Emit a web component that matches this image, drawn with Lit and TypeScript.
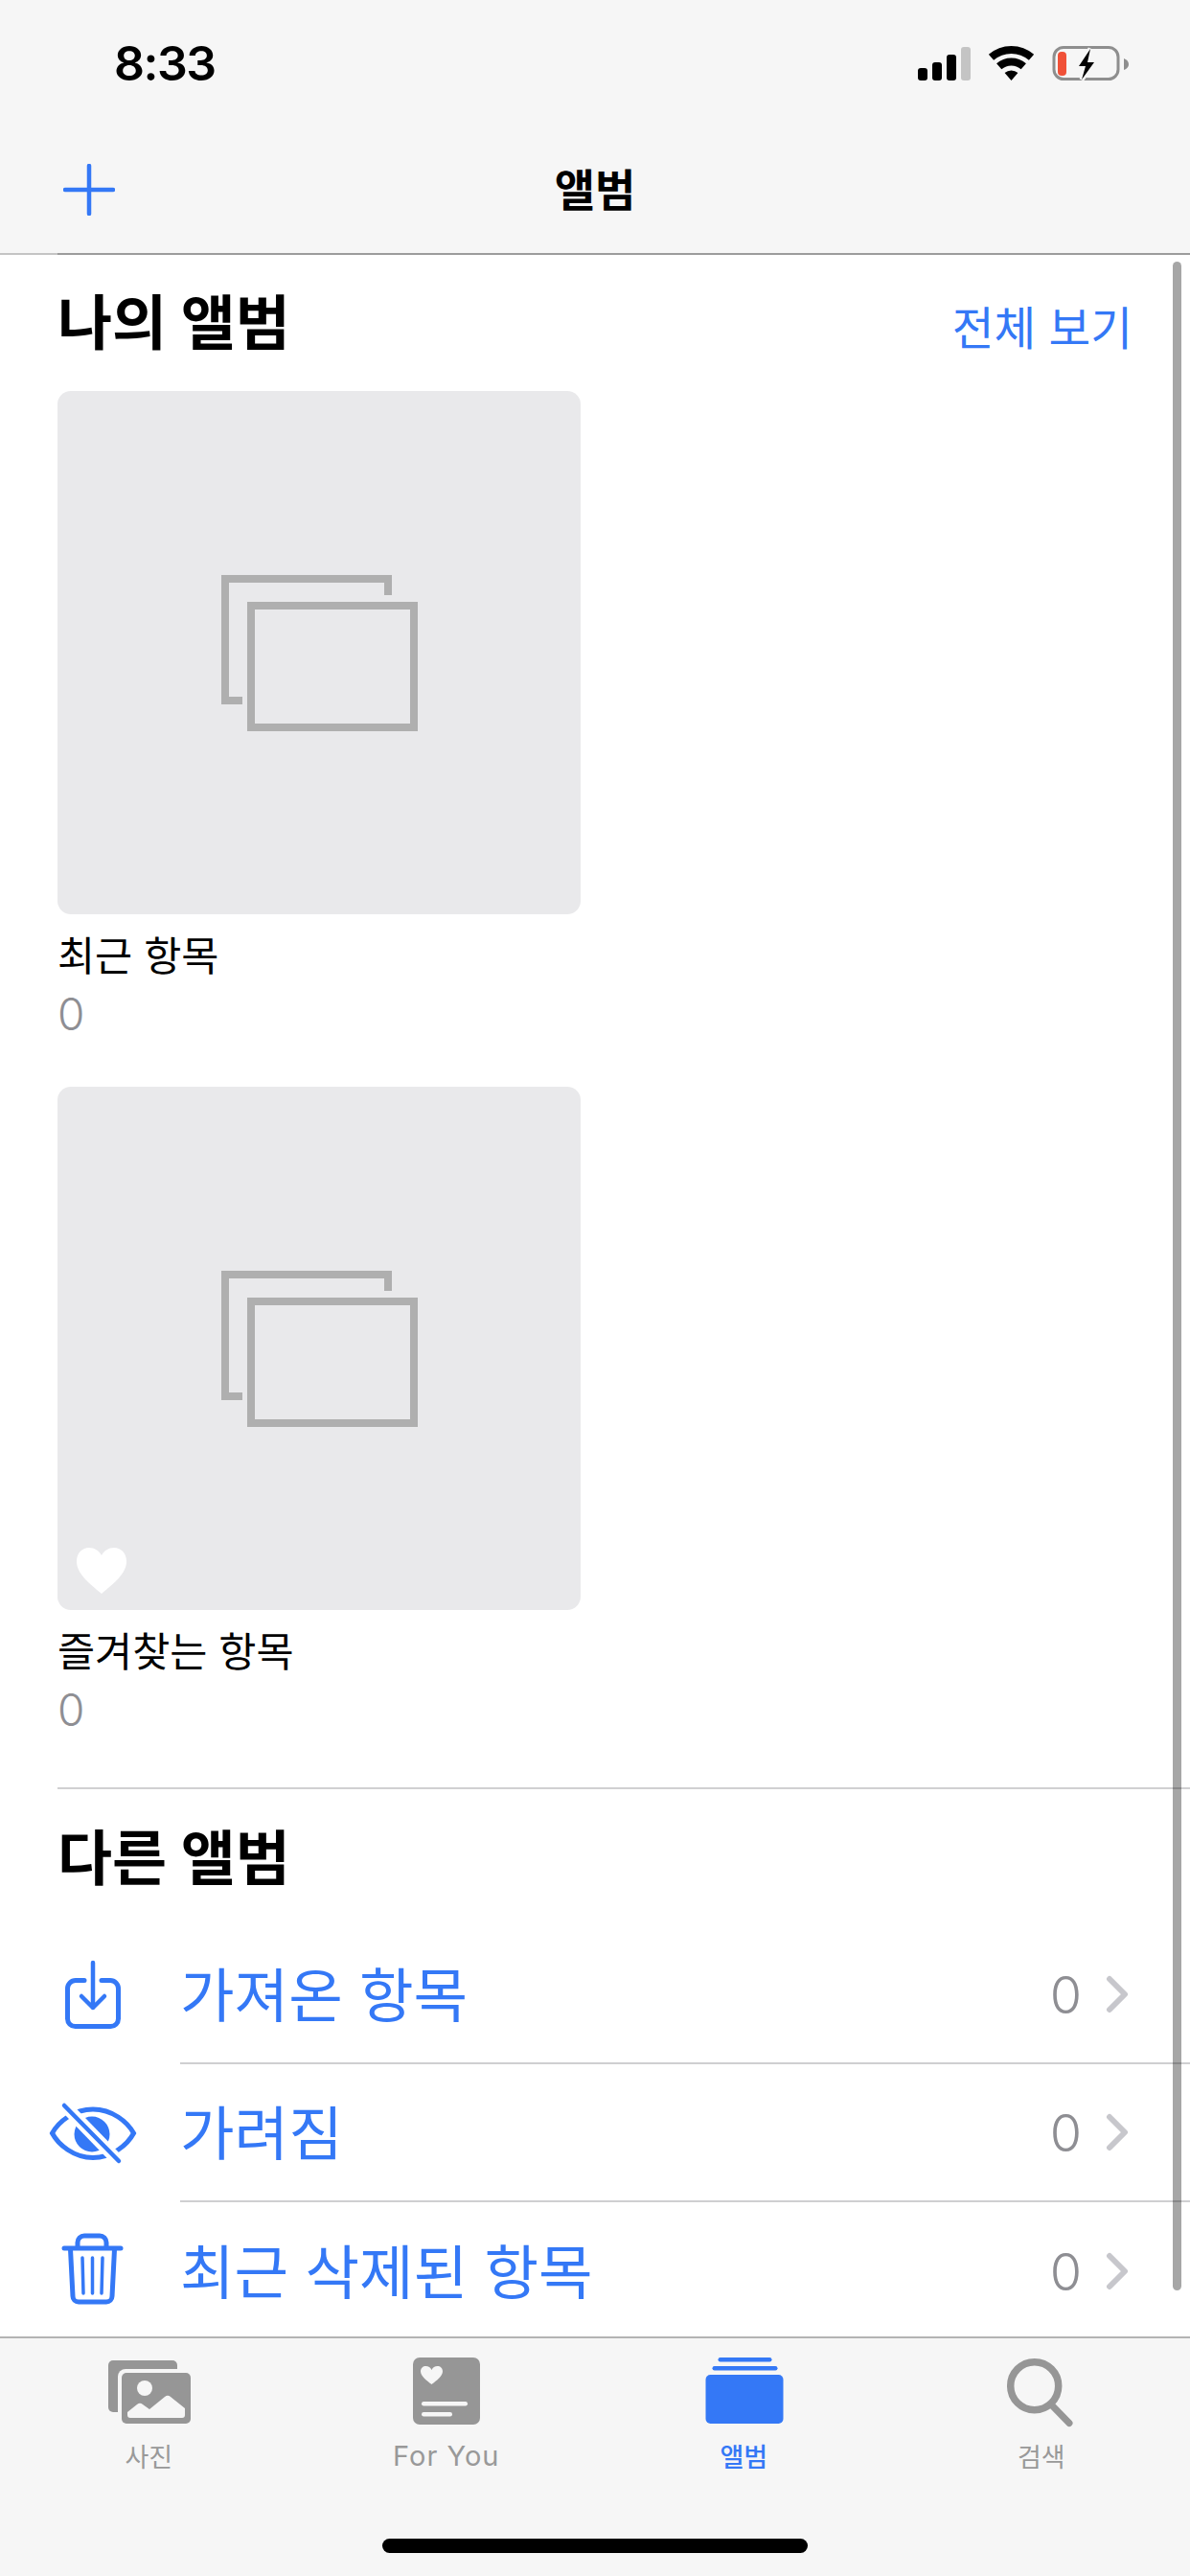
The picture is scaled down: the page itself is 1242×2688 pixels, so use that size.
import { LitElement, css, html, svg } from "lit";
import { customElement } from "lit/decorators.js";

const rows = [
    { name: "가져온 항목", count: 0, icon: "import" },
    { name: "가려짐", count: 0, icon: "eye" },
    { name: "최근 삭제된 항목", count: 0, icon: "trash" },
];

const tabs = [
    { name: "사진", icon: "photos", active: false },
    { name: "For You", icon: "foryou", active: false },
    { name: "앨범", icon: "albums", active: true },
    { name: "검색", icon: "search", active: false },
];

const rowIcons: Record<string, any> = {
    import: svg`
        <path d="M41 34.5H32a8.5 8.5 0 0 0-8.5 8.5v31.5a8 8 0 0 0 8 8h37a8 8 0 0 0 8-8V43a8.5 8.5 0 0 0-8.5-8.5h-9" fill="none" stroke="#3478f6" stroke-width="5" stroke-linecap="round"/>
        <path d="M50 16V63M38 51L50 63L62 51" fill="none" stroke="#3478f6" stroke-width="4.5" stroke-linecap="round" stroke-linejoin="round"/>`,
    eye: svg`
        <path d="M7.5 50C14 38 30 25 50 25C70 25 86 38 92.5 50C86 62 70 75.5 50 75.5C30 75.5 14 62 7.5 50Z" fill="none" stroke="#3478f6" stroke-width="5"/>
        <circle cx="49" cy="51" r="18.5" fill="#3478f6"/>
        <path d="M16 16.5L81 83.5" stroke="#fff" stroke-width="13"/>
        <path d="M20 21L77 79" stroke="#3478f6" stroke-width="4.5" stroke-linecap="round"/>`,
    trash: svg`
        <path d="M20 26H79" stroke="#3478f6" stroke-width="5" stroke-linecap="round"/>
        <path d="M34 26V20a7 7 0 0 1 7-7H57a7 7 0 0 1 7 7V26" fill="none" stroke="#3478f6" stroke-width="5"/>
        <path d="M26.5 27L29 76a6 6 0 0 0 6 6H64a6 6 0 0 0 6-6L72.500 27" fill="none" stroke="#3478f6" stroke-width="5"/>
        <path d="M39 36L40 73M49.500 36V73M60 36L59 73" stroke="#3478f6" stroke-width="3.500" stroke-linecap="round"/>`,
};

const tabIcons: Record<string, any> = {
    photos: svg`
        <rect x="8" y="4" width="72" height="54" rx="5" fill="#969696"/>
        <rect x="18" y="13" width="80" height="61" rx="8" fill="#f6f6f6"/>
        <rect x="22" y="17" width="72" height="53" rx="5" fill="#969696"/>
        <circle cx="46" cy="33" r="8" fill="#f6f6f6"/>
        <path d="M28 58L38 50Q41 47.500 44 50L51 55L67 42Q70 39.500 73 42L88 54V61Q88 64 85 64H31Q28 64 28 61Z" fill="#f6f6f6"/>`,
    foryou: svg`
        <rect x="15" y="1" width="70" height="70" rx="7" fill="#969696"/>
        <path d="M34.500 29C29 25 23 20 23 15.500C23 12 25.500 10 28.500 10C31 10 33.500 11.500 34.500 14C35.500 11.500 38 10 40.500 10C43.500 10 46 12 46 15.500C46 20 40 25 34.500 29Z" fill="#f6f6f6"/>
        <rect x="24" y="47" width="48" height="4.500" rx="2.200" fill="#f6f6f6"/>
        <rect x="24" y="58" width="32" height="4.500" rx="2.200" fill="#f6f6f6"/>`,
    albums: svg`
        <rect x="23.500" y="1" width="56" height="4.500" rx="2.200" fill="#3478f6"/>
        <rect x="17.500" y="10" width="68" height="4.500" rx="2.200" fill="#3478f6"/>
        <rect x="10.500" y="19" width="81" height="51" rx="5" fill="#3478f6"/>`,
    search: svg`
        <circle cx="42.700" cy="30.700" r="25" fill="none" stroke="#969696" stroke-width="7.500"/>
        <path d="M61 51L79 69.500" stroke="#969696" stroke-width="7" stroke-linecap="round"/>`,
};

@customElement("app-root")
export class AppRoot extends LitElement {
    static styles = css`
        :host {
            display: flex;
            flex-direction: column;
            position: relative;
            width: 1242px;
            height: 2688px;
            overflow: hidden;
            background: #fff;
            color: #000;
            font-family: Inter, "Noto Sans CJK KR", sans-serif;
        }
        svg {
            display: block;
            flex: none;
        }
        .top {
            height: 264px;
            background: #f6f6f6;
        }
        .status {
            display: flex;
            justify-content: space-between;
            align-items: center;
            height: 132px;
            padding: 0 57px 0 119px;
        }
        .time {
            font-size: 50px;
            font-weight: 600;
            line-height: 138px;
            letter-spacing: -1.500px;
        }
        .nav {
            display: grid;
            grid-template-columns: 1fr auto 1fr;
            align-items: center;
            height: 132px;
        }
        .plus {
            margin-left: 66px;
        }
        .title {
            font-size: 46px;
            font-weight: 700;
            line-height: 132px;
        }
        .rule {
            display: flex;
            height: 2px;
        }
        .rule-start {
            width: 60px;
            background: #c4c4c4;
        }
        .rule-end {
            flex: 1;
            background: #9c9c9c;
        }
        main {
            flex: 1;
            min-height: 0;
            overflow: hidden;
        }
        .head {
            display: flex;
            justify-content: space-between;
            align-items: center;
            height: 142px;
            padding: 0 60px 0 60px;
        }
        h2 {
            margin: 0;
            font-size: 62px;
            font-weight: 700;
            line-height: 80px;
            padding-top: 2px;
        }
        .all {
            font-size: 47.500px;
            color: #3478f6;
            line-height: 60px;
            padding-top: 12px;
        }
        .album {
            padding-left: 60px;
            margin-bottom: 45px;
        }
        .album.last {
            margin-bottom: 50px;
        }
        .tile {
            position: relative;
            display: flex;
            justify-content: center;
            align-items: center;
            width: 546px;
            height: 546px;
            margin-bottom: 11px;
            border-radius: 14px;
            background: #e9e9eb;
        }
        .fav {
            position: absolute;
            left: 20px;
            bottom: 17px;
        }
        .label {
            font-size: 42.500px;
            line-height: 62px;
            padding-top: 2px;
            height: 60px;
        }
        .count {
            font-size: 46px;
            line-height: 62px;
            font-weight: 300;
            color: #8e8e93;
        }
        .other {
            margin-left: 60px;
            border-top: 2px solid #d0d0d2;
        }
        .other .head {
            height: 143px;
            padding-left: 0;
        }
        .row {
            display: flex;
            align-items: center;
            height: 144px;
            padding-left: 47px;
        }
        .row-body {
            display: flex;
            flex: 1;
            align-items: center;
            align-self: stretch;
            margin-left: 41px;
            padding-right: 64px;
            border-bottom: 2px solid #cfcfd1;
        }
        .row.last .row-body {
            border-bottom: none;
        }
        .row-name {
            flex: 1;
            font-size: 61.500px;
            color: #3478f6;
            padding-bottom: 6px;
        }
        .row-count {
            font-size: 54px;
            font-weight: 300;
            color: #8e8e93;
        }
        .chev {
            margin-left: 25px;
        }
        .list {
            margin-left: -60px;
        }
        .tabs {
            display: grid;
            grid-template-columns: repeat(4, 1fr);
            height: 250px;
            box-sizing: border-box;
            background: #f6f6f6;
            border-top: 2px solid #b4b4b4;
            padding-top: 19px;
        }
        .tab {
            display: flex;
            flex-direction: column;
            align-items: center;
            color: #999;
            font-size: 27px;
            line-height: 40px;
        }
        .tab.active {
            color: #3478f6;
            font-weight: 500;
        }
        .tab.latin {
            font-size: 29px;
            letter-spacing: 1px;
        }
        .tab-name {
            margin-top: 10px;
        }
        .tab.latin .tab-name {
            margin-top: 8px;
        }
        .home {
            position: absolute;
            left: 399px;
            top: 2649px;
            width: 444px;
            height: 15px;
            border-radius: 8px;
            background: #000;
        }
        .scroll {
            position: absolute;
            left: 1224px;
            top: 273px;
            width: 9px;
            height: 2117px;
            border-radius: 5px;
            background: rgba(0, 0, 0, 0.35);
        }
    `;

    private statusIcons() {
        return html`
            <svg width="235" height="55" viewBox="950 40 235 55">
                <rect x="958" y="72" width="10" height="13" rx="3"/>
                <rect x="973" y="66" width="10" height="19" rx="3"/>
                <rect x="988" y="58" width="10" height="27" rx="3"/>
                <rect x="1003" y="50" width="10" height="35" rx="3" fill="#c4c4c4"/>
                <path d="M1034.500 60.800A32 32 0 0 1 1076.500 60.800M1042.700 70.300A19.500 19.500 0 0 1 1068.300 70.300" fill="none" stroke="#000" stroke-width="8"/>
                <path d="M1055.500 85L1048.600 77.100A10.500 10.500 0 0 1 1062.400 77.100Z"/>
                <rect x="1100" y="50.500" width="67" height="33" rx="10" fill="none" stroke="#8e8e8e" stroke-width="3"/>
                <path d="M1173 62Q1178 64 1178 68Q1178 72 1173 74Z" fill="#8e8e8e"/>
                <rect x="1104" y="55" width="9" height="25" rx="4" fill="#f05138"/>
                <path d="M1138 52L1126 70H1133L1129 84L1142 66H1135Z" fill="#f6f6f6" stroke="#f6f6f6" stroke-width="5"/>
                <path d="M1138 52L1126 70H1133L1129 84L1142 66H1135Z"/>
            </svg>
        `;
    }

    private placeholder() {
        return html`
            <svg width="205" height="163" viewBox="0 0 205 163" fill="none" stroke="#afafaf" stroke-width="8">
                <path d="M174 21V4H4V131H22"/>
                <rect x="31" y="32" width="170" height="127"/>
            </svg>
        `;
    }

    private album(name: string, favorite: boolean, last: boolean) {
        return html`
            <div class="album ${last ? "last" : ""}">
                <div class="tile">
                    ${this.placeholder()}
                    ${favorite ? html`
                        <svg class="fav" width="52" height="48" viewBox="0 0 52 48">
                            <path d="M26 48C12 36 0 27 0 14C0 5.500 6 0 13 0C18.500 0 23.500 3 26 8C28.500 3 33.500 0 39 0C46 0 52 5.500 52 14C52 27 40 36 26 48Z" fill="#fff"/>
                        </svg>` : ""}
                </div>
                <div class="label">${name}</div>
                <div class="count">0</div>
            </div>
        `;
    }

    render() {
        return html`
            <header class="top">
                <div class="status">
                    <span class="time">8:33</span>
                    ${this.statusIcons()}
                </div>
                <div class="nav">
                    <svg class="plus" width="54" height="54" viewBox="0 0 54 54">
                        <path d="M27 2V52M2 27H52" stroke="#3478f6" stroke-width="4.500" stroke-linecap="round"/>
                    </svg>
                    <span class="title">앨범</span>
                </div>
            </header>
            <div class="rule"><span class="rule-start"></span><span class="rule-end"></span></div>
            <main>
                <div class="head">
                    <h2>나의 앨범</h2>
                    <span class="all">전체 보기</span>
                </div>
                ${this.album("최근 항목", false, false)}
                ${this.album("즐겨찾는 항목", true, true)}
                <section class="other">
                    <div class="head"><h2>다른 앨범</h2></div>
                    <div class="list">
                        ${rows.map((r, i) => html`
                            <div class="row ${i === rows.length - 1 ? "last" : ""}">
                                <svg width="100" height="100" viewBox="0 0 100 100">${rowIcons[r.icon]}</svg>
                                <div class="row-body">
                                    <span class="row-name">${r.name}</span>
                                    <span class="row-count">${r.count}</span>
                                    <svg class="chev" width="24" height="40" viewBox="0 0 24 40">
                                        <path d="M4 4L20 20L4 36" fill="none" stroke="#c7c7cc" stroke-width="6" stroke-linecap="round" stroke-linejoin="round"/>
                                    </svg>
                                </div>
                            </div>
                        `)}
                    </div>
                </section>
            </main>
            <nav class="tabs">
                ${tabs.map(t => html`
                    <div class="tab ${t.active ? "active" : ""} ${t.icon === "foryou" ? "latin" : ""}">
                        <svg width="100" height="76" viewBox="0 0 100 76">${tabIcons[t.icon]}</svg>
                        <span class="tab-name">${t.name}</span>
                    </div>
                `)}
            </nav>
            <div class="scroll"></div>
            <div class="home"></div>
        `;
    }
}
